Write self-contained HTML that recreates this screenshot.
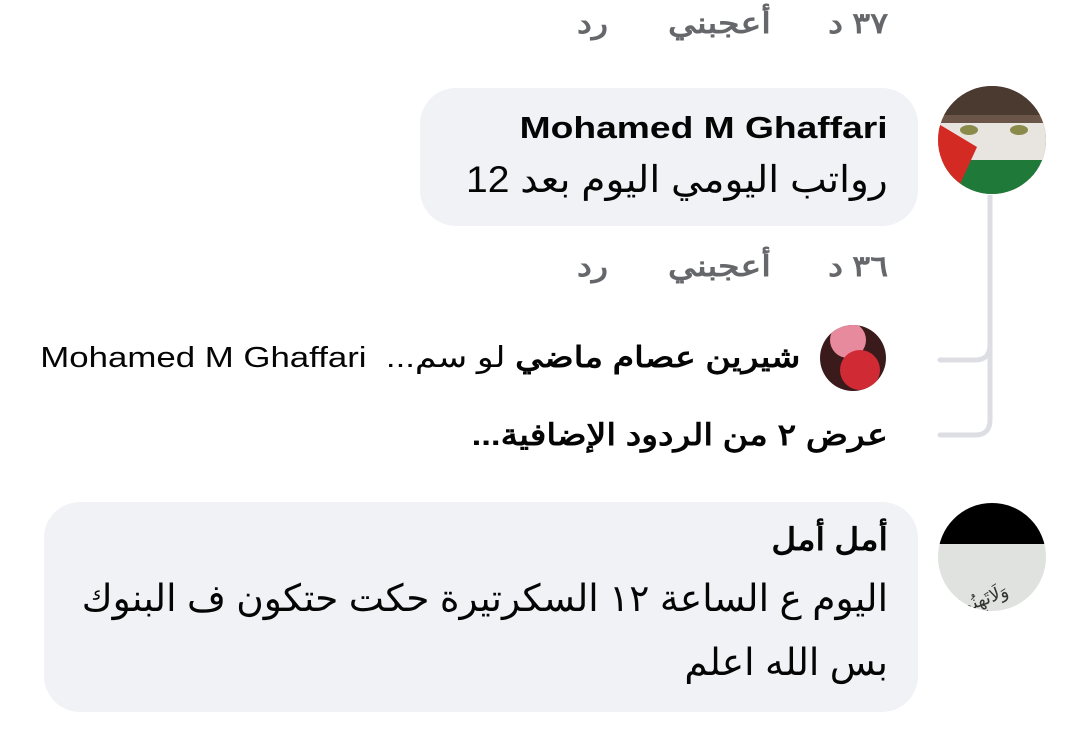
<!DOCTYPE html>
<html><head><meta charset="utf-8"><style>
body{margin:0;width:1080px;height:732px;background:#fff;position:relative;overflow:hidden;font-family:"Liberation Sans","Noto Sans CJK SC",sans-serif;color:#050505}
.a{position:absolute;white-space:nowrap}
.r{direction:rtl;unicode-bidi:isolate}
.m{color:#65676b;font-weight:bold;font-size:29px}
.b{position:absolute;background:#f0f2f5}
.sr{transform-origin:right center}
.sl{transform-origin:left center}
</style></head><body>
<div class="a m r sr" dir="rtl" style="right:192px;top:6px;transform:scaleX(1.15)">٣٧ د</div>
<div class="a m r sl" dir="rtl" style="left:668px;top:6px;transform:scaleX(1.2)">أعجبني</div>
<div class="a m r sl" dir="rtl" style="left:577px;top:6px;transform:scaleX(1.15)">رد</div>

<svg class="a" style="left:937px;top:85px" width="110" height="110" viewBox="0 0 110 110">
<defs><clipPath id="c1"><circle cx="55" cy="55" r="54"/></clipPath></defs>
<g clip-path="url(#c1)">
<rect width="110" height="110" fill="#6b5548"/>
<rect y="0" width="110" height="30" fill="#4a3a30"/>
<rect y="38" width="110" height="42" fill="#e8e4e0"/>
<rect y="75" width="110" height="35" fill="#1f7a3a"/>
<polygon points="0,38 40,62 18,110 0,110" fill="#d42a24"/>
<ellipse cx="32" cy="45" rx="9" ry="5" fill="#8a8a4a"/>
<ellipse cx="82" cy="45" rx="9" ry="5" fill="#8a8a4a"/>
</g></svg>

<div class="b" style="left:420px;top:88px;width:498px;height:138px;border-radius:36px"></div>
<div class="a sr" style="right:192px;top:110px;font-weight:bold;font-size:31px;transform:scaleX(1.2)">Mohamed M Ghaffari</div>
<div class="a r sr" dir="rtl" style="right:192px;top:158px;font-size:37px;transform:scaleX(1.055)">رواتب اليومي اليوم بعد 12</div>

<div class="a m r sr" dir="rtl" style="right:192px;top:249px;transform:scaleX(1.15)">٣٦ د</div>
<div class="a m r sl" dir="rtl" style="left:668px;top:249px;transform:scaleX(1.2)">أعجبني</div>
<div class="a m r sl" dir="rtl" style="left:577px;top:249px;transform:scaleX(1.15)">رد</div>

<svg class="a" style="left:930px;top:195px" width="70" height="250">
<path d="M60 0 V150 Q60 165 45 165 H10 M60 150 V225 Q60 240 45 240 H10" fill="none" stroke="#dcdee3" stroke-width="5" stroke-linecap="round"/>
</svg>

<svg class="a" style="left:820px;top:325px" width="66" height="66"><defs><clipPath id="c2"><circle cx="33" cy="33" r="33"/></clipPath></defs>
<g clip-path="url(#c2)"><rect width="66" height="66" fill="#3a1a1a"/><circle cx="28" cy="15" r="18" fill="#e88a9e"/><circle cx="40" cy="45" r="20" fill="#d02a35"/></g></svg>
<div class="a sr" style="right:280px;top:340px;font-size:29px;direction:rtl;transform:scaleX(1.2)"><b>شيرين عصام ماضي</b> <span dir="rtl">لو سم...</span>&nbsp; <span dir="ltr">Mohamed M Ghaffari</span></div>

<div class="a r sr" dir="rtl" style="right:192px;top:418px;font-weight:bold;font-size:30px;transform:scaleX(1.16)">عرض ٢ من الردود الإضافية...</div>

<svg class="a" style="left:937px;top:502px" width="110" height="110"><defs><clipPath id="c3"><circle cx="55" cy="55" r="54"/></clipPath></defs>
<g clip-path="url(#c3)"><rect width="110" height="110" fill="#dfe2df"/><rect width="110" height="42" fill="#000"/><text x="20" y="100" font-size="18" transform="rotate(-20 55 95)" fill="#333">وَلَاتَهِنُوا</text></g></svg>

<div class="b" style="left:44px;top:502px;width:874px;height:210px;border-radius:36px"></div>
<div class="a r sr" dir="rtl" style="right:192px;top:522px;font-weight:bold;font-size:31px;transform:scaleX(1.1)">أمل أمل</div>
<div class="a r" dir="rtl" style="right:192px;top:576px;font-size:37.5px">اليوم ع الساعة ١٢ السكرتيرة حكت حتكون ف البنوك</div>
<div class="a r" dir="rtl" style="right:192px;top:640px;font-size:37.5px">بس الله اعلم</div>
</body></html>
